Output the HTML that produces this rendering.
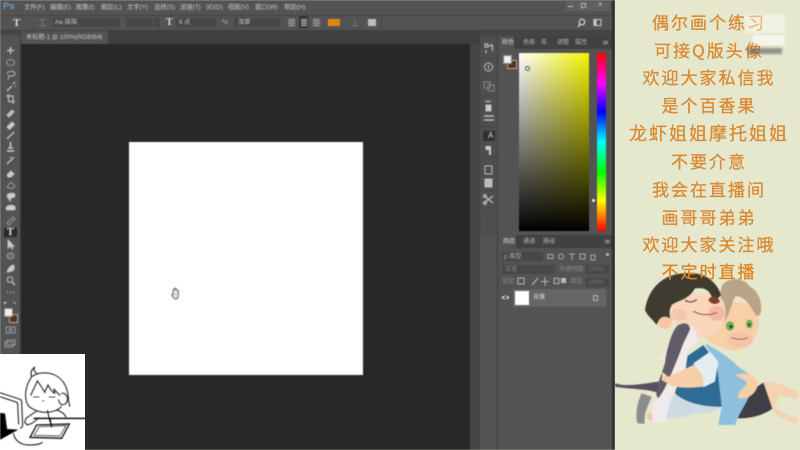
<!DOCTYPE html>
<html><head><meta charset="utf-8"><style>
html,body{margin:0;padding:0;width:800px;height:450px;overflow:hidden;background:#e6e8cd}
*{box-sizing:border-box}
div{position:absolute}
#ps{left:0;top:0;width:615px;height:450px;background:#535353;overflow:hidden;filter:blur(.6px);font-family:"Liberation Sans","Noto Sans CJK SC",sans-serif;color:#c4c4c4}
.m{top:4px;font-size:6.3px;line-height:8px;white-space:nowrap;color:#c8c8c8}
.t{font-size:6.2px;line-height:8px;white-space:nowrap;color:#b0b0b0}
.f{background:#474747;height:9px}
#cream{left:615px;top:0;width:185px;height:450px;background:#e6e8cd}
.l{left:0;width:188px;text-align:center;font-family:"WenQuanYi Zen Hei","Noto Sans CJK SC",sans-serif;color:#d98a35;font-size:17px;letter-spacing:2px;line-height:22px;white-space:nowrap;filter:blur(.35px);-webkit-text-stroke:.3px #d98a35}
</style></head><body>
<div id="ps">
<div style="left:0;top:15px;width:615px;height:1px;background:#444"></div>
<div style="left:0;top:30px;width:615px;height:1px;background:#404040"></div>
<div style="left:3px;top:1px;font-size:9.5px;line-height:12px;font-weight:bold;color:#6f9fc0">Ps</div>
<div class="m" style="left:24px">文件(F)</div><div class="m" style="left:50px">编辑(E)</div><div class="m" style="left:76px">图像(I)</div><div class="m" style="left:101px">图层(L)</div><div class="m" style="left:127px">文字(Y)</div><div class="m" style="left:154px">选择(S)</div><div class="m" style="left:180px">滤镜(T)</div><div class="m" style="left:206px">3D(D)</div><div class="m" style="left:228px">视图(V)</div><div class="m" style="left:255px">窗口(W)</div><div class="m" style="left:284px">帮助(H)</div>
<div style="left:566px;top:1px;width:44px;height:10px;background:#5f5f5f"></div>
<div style="left:568px;top:6px;width:5px;height:1px;background:#ccc"></div>
<div style="left:581px;top:3px;width:5px;height:5px;border:1px solid #bbb"></div>
<div style="left:598px;top:0;font-size:8px;line-height:10px;color:#ccc">×</div>
<div style="left:13px;top:17px;font:bold 11px/12px 'Liberation Serif',serif;color:#ddd">T</div>
<div style="left:38px;top:18px;font:9px/10px 'Liberation Serif',serif;color:#8a8a8a">工</div>
<div class="f" style="left:53px;top:18px;width:67px;height:9px"></div>
<div class="t" style="left:55px;top:19px;color:#c8c8c8">Aa·简简</div>
<div class="f" style="left:126px;top:18px;width:26px"></div>
<div class="f" style="left:154px;top:18px;width:6px"></div>
<div style="left:166px;top:17px;font:bold 10px/12px 'Liberation Serif',serif;color:#ddd">T</div>
<div class="f" style="left:176px;top:18px;width:40px"></div>
<div class="t" style="left:179px;top:19px;color:#ccc">8 点</div>
<div class="t" style="left:222px;top:19px">ªa</div>
<div class="f" style="left:234px;top:18px;width:46px"></div>
<div class="t" style="left:238px;top:19px;color:#ccc">浑厚</div>
<div style="left:288px;top:19px;width:7px;height:7px;background:repeating-linear-gradient(#aaa 0 1px,#555 1px 2px)"></div>
<div style="left:299px;top:16px;width:9px;height:12px;background:#333"></div>
<div style="left:301px;top:19px;width:6px;height:7px;background:repeating-linear-gradient(#bbb 0 1px,#444 1px 2px)"></div>
<div style="left:313px;top:19px;width:7px;height:7px;background:repeating-linear-gradient(#aaa 0 1px,#555 1px 2px)"></div>
<div style="left:328px;top:19px;width:12px;height:7px;background:#e08614"></div>
<div style="left:351px;top:18px;font:9px/10px 'Liberation Serif',serif;color:#888">⊥</div>
<div style="left:368px;top:19px;width:8px;height:7px;background:#bdbdbd"></div>
<div style="left:381px;top:16px;width:1px;height:13px;background:#444"></div>
<svg style="position:absolute;left:575px;top:17px" width="32" height="12" viewBox="0 0 32 12"><circle cx="7" cy="5" r="2.8" fill="none" stroke="#ddd" stroke-width="1.1"/><path d="M5 7.2 3 10" stroke="#ddd" stroke-width="1.3"/><rect x="19" y="2.5" width="7" height="6" fill="none" stroke="#ccc"/><rect x="19" y="2.5" width="2.5" height="6" fill="#ccc"/></svg>
<div style="left:21px;top:31px;width:458px;height:13px;background:#3f3f3f"></div>
<div style="left:21px;top:31px;width:87px;height:13px;background:#535353"></div>
<div class="t" style="left:26px;top:34px;color:#c8c8c8">未标题-1 @ 100%(RGB/8#)</div>
<div class="t" style="left:99px;top:34px">×</div>
<div style="left:0;top:31px;width:21px;height:4px;background:#454545"></div>
<div style="left:21px;top:44px;width:449px;height:406px;background:#282828"></div>
<div style="left:470px;top:44px;width:9px;height:406px;background:#464646"></div>
<div style="left:20px;top:31px;width:1px;height:419px;background:#3c3c3c"></div>
<div style="left:129px;top:142px;width:234px;height:233px;background:#fff"></div>
<svg style="position:absolute;left:170px;top:287px" width="12" height="14" viewBox="0 0 12 14"><path d="M3 7V3.200c0-1 1.300-1 1.300 0V1.800c0-1 1.400-1 1.400 0v1c0-.9 1.400-.9 1.400 0v1c0-.8 1.300-.8 1.300 0v4.700c0 1.800-1 3-1.400 3.500H4.500C3.500 11 2.500 9.500 1.800 8.500 1.300 7.500 2.300 6.800 3 7.500Z" fill="#ddd" stroke="#555" stroke-width=".8"/></svg>
<svg style="position:absolute;left:0;top:44px" width="21" height="306" viewBox="0 44 21 306" fill="none" stroke="#bdbdbd" stroke-width="1">
<path d="M10.500 47v7M7 50.500h7" stroke-width="1.600"/>
<ellipse cx="10.500" cy="62.500" rx="4" ry="3" stroke="#999"/>
<path d="M7 74c0-3.500 8-3.500 8-.5s-5 3-6 2l-1 4"/>
<path d="M7 91l5-5M13 84l2-2M15 86h1" stroke-width="1.400"/>
<path d="M8.500 94v7.500H15M6 96h7v8" stroke-width="1.200"/>
<path d="M7 115l5-5 2 2-5 5z" fill="#bdbdbd"/>
<path d="M7 127l5-5 2.500 2.500-5 5z" fill="#ccc"/>
<path d="M7 139l7-7" stroke-width="1.400"/>
<path d="M8 148h5M10.500 142v5M7 151h7" stroke-width="1.800"/>
<path d="M7 164l7-7M10 157l1 1" stroke-width="1.400"/>
<path d="M7 175l4-4 3 3-3 3H8z" fill="#ccc"/>
<path d="M7 187l4-5 4 4-3 3z" stroke="#999"/>
<path d="M7 196c0-3 7-4 8-1 0 3-3 3-4 3l-1 3z" fill="#ccc"/>
<path d="M6 209c0-4 7-5 9-2 1 2 0 3-2 3H7z" fill="#ccc"/>
<path d="M7 223l6-6 2 2-6 6z" stroke="#999"/>
</svg>
<div style="left:4px;top:228px;width:13px;height:9px;background:#2a2a2a"></div>
<div style="left:7px;top:227px;font:bold 10px/11px 'Liberation Serif',serif;color:#eee">T</div>
<svg style="position:absolute;left:0;top:238px" width="21" height="112" viewBox="0 238 21 112" fill="none" stroke="#bdbdbd" stroke-width="1">
<path d="M8 240v8l2-2 2 3 1-1-2-2h3z" fill="#ccc"/>
<ellipse cx="10.500" cy="256" rx="3.500" ry="3" stroke="#999" fill="#6a6a6a"/>
<path d="M7 272c1-3 3-6 6-7 2 1 1 3 1 4s-2 3-7 3z" fill="#ccc"/>
<circle cx="10" cy="279.500" r="2.800"/><path d="M12 282l3 3" stroke-width="1.400"/>
<path d="M7 292.500h1M10 292.500h1M13 292.500h1" stroke-width="1.400"/>
<rect x="6" y="327" width="9" height="6" stroke="#999"/><circle cx="10.500" cy="330" r="1.500" stroke="#999"/>
<rect x="7" y="340" width="8" height="5" stroke="#999"/><rect x="5" y="342" width="8" height="5" stroke="#999"/>
<path d="M4 302l3 0-3 3z" fill="#ccc" stroke="none"/><path d="M13 302l3 2"/>
</svg>
<div style="left:9px;top:314px;width:9px;height:9px;background:#5d3018;border:1px solid #aaa"></div>
<div style="left:4px;top:308px;width:9px;height:9px;background:#eef0e2;border:1px solid #888"></div>
<div style="left:479px;top:31px;width:1px;height:419px;background:#3e3e3e"></div>
<div style="left:497px;top:31px;width:1px;height:419px;background:#3e3e3e"></div>
<div style="left:480px;top:31px;width:17px;height:5px;background:#454545"></div>
<div style="left:498px;top:31px;width:114px;height:5px;background:#454545"></div>
<div style="left:480px;top:36px;width:17px;height:200px;background:#4e4e4e"></div>
<svg style="position:absolute;left:480px;top:36px" width="17" height="180" viewBox="480 36 17 180" fill="none" stroke="#bdbdbd" stroke-width="1">
<path d="M485 44h3v3h-3zM486 50v3M491 44c2 1 2 4 1 7M489 46h3" stroke-width="1.200"/>
<path d="M480 58h17M480 77h17M480 96h17" stroke="#444"/>
<circle cx="488.500" cy="67" r="4"/><path d="M488.500 65v4"/>
<rect x="484" y="82" width="6" height="6" stroke="#888"/><rect x="488" y="85" width="6" height="6" stroke="#888"/>
<path d="M485 101l3 1 3-1M486 105h5v6h-5z" fill="#ccc"/>
<path d="M484 116h10M484 120h10" stroke-width="1.400"/>
<path d="M480 127h17" stroke="#444"/>
<rect x="483" y="131" width="12" height="10" fill="#2f2f2f" stroke="none"/>
<path d="M480 157h17M480 191h17M480 208h17" stroke="#444"/>
<path d="M486 146h5v9h-2v-5h-2c-2 0-2-4-1-4z" fill="#ccc" stroke="none"/>
<rect x="485" y="166" width="7" height="8"/><rect x="485" y="179" width="7" height="8" fill="#bbb"/>
<path d="M484 196l9 7M484 203l9-7" stroke-width="1.300"/><circle cx="485" cy="196" r="1.500"/><circle cx="485" cy="203" r="1.500"/>
</svg>
<div style="left:488px;top:131px;font:8px/10px 'Liberation Sans',sans-serif;color:#ddd">A</div>
<div style="left:498px;top:36px;width:114px;height:13px;background:#414141"></div>
<div style="left:498px;top:36px;width:16px;height:13px;background:#535353"></div>
<div class="t" style="left:502px;top:39px;color:#d0d0d0">颜色</div><div class="t" style="left:523px;top:39px">色板</div><div class="t" style="left:541px;top:39px">库</div><div class="t" style="left:557px;top:39px">调整</div><div class="t" style="left:575px;top:39px">属性</div>
<div style="left:603px;top:41px;width:5px;height:4px;background:repeating-linear-gradient(#aaa 0 1px,#414141 1px 2px)"></div>
<div style="left:507px;top:60px;width:10px;height:9px;background:#5d3018;border:1px solid #aaa"></div>
<div style="left:503px;top:55px;width:9px;height:9px;background:#eef0e2;border:1px solid #888"></div>
<div style="left:519px;top:53px;width:70px;height:178px;background:linear-gradient(to top,#000,rgba(0,0,0,0)),linear-gradient(to right,#fff,#f4f400)"></div>
<div style="left:525px;top:66px;width:5px;height:5px;border-radius:50%;border:1px solid #555"></div>
<div style="left:597px;top:53px;width:9px;height:178px;background:linear-gradient(#ff0000,#ff00ff 17%,#0000ff 33%,#00ffff 50%,#00ff00 67%,#ffff00 83%,#ff0000)"></div>
<div style="left:592px;top:199px;width:3px;height:3px;border-radius:50%;background:#eee"></div>
<div style="left:498px;top:231px;width:114px;height:5px;background:#535353"></div>
<div style="left:498px;top:235px;width:114px;height:13px;background:#414141"></div>
<div style="left:498px;top:235px;width:18px;height:13px;background:#535353"></div>
<div class="t" style="left:503px;top:238px;color:#d0d0d0">图层</div><div class="t" style="left:523px;top:238px">通道</div><div class="t" style="left:543px;top:238px">路径</div>
<div style="left:605px;top:240px;width:5px;height:4px;background:repeating-linear-gradient(#aaa 0 1px,#414141 1px 2px)"></div>
<div class="f" style="left:502px;top:252px;width:41px"></div>
<div class="t" style="left:504px;top:253px">ρ 类型</div>
<svg style="position:absolute;left:546px;top:252px" width="56" height="10" viewBox="0 0 56 10" fill="none" stroke="#aaa"><rect x="2" y="2.500" width="5" height="4"/><circle cx="15" cy="4.500" r="2.500"/><path d="M23 2h6M26 2v6"/><rect x="34" y="2" width="5" height="5"/><rect x="45" y="3" width="4" height="5"/></svg>
<div style="left:606px;top:253px;width:3px;height:3px;border-radius:50%;background:#bbb"></div>
<div class="f" style="left:502px;top:265px;width:53px"></div>
<div class="t" style="left:505px;top:266px;color:#888">正常</div>
<div class="t" style="left:559px;top:266px;color:#888">不透明度:</div>
<div class="f" style="left:586px;top:265px;width:23px"></div><div class="t" style="left:588px;top:266px;color:#777">100%</div>
<div class="t" style="left:502px;top:278px;color:#888">锁定:</div>
<svg style="position:absolute;left:516px;top:276px" width="48" height="11" viewBox="0 0 48 11" fill="none" stroke="#b5b5b5"><rect x="2" y="2" width="6" height="6"/><path d="M16 9l6-7" stroke-width="1.300"/><path d="M29 1v9M25 5.500h8"/><rect x="38" y="2.500" width="5" height="5"/></svg>
<div style="left:561px;top:278px;width:5px;height:5px;background:#bbb"></div>
<div class="t" style="left:570px;top:278px;color:#888">填充:</div>
<div class="f" style="left:586px;top:278px;width:23px"></div><div class="t" style="left:588px;top:279px;color:#777">100%</div>
<svg style="position:absolute;left:501px;top:294px" width="9" height="7" viewBox="0 0 9 7"><path d="M.5 3.500C2 1 7 1 8.500 3.500 7 6 2 6 .5 3.500Z" fill="#ccc"/><circle cx="4.500" cy="3.500" r="1.300" fill="#444"/></svg>
<div style="left:513px;top:289px;width:93px;height:18px;background:#656565"></div>
<div style="left:515px;top:291px;width:14px;height:14px;background:#fff"></div>
<div class="t" style="left:533px;top:294px;color:#ddd">背景</div>
<div style="left:593px;top:295px;width:5px;height:6px;border:1px solid #bbb;border-radius:1px"></div>
<div style="left:612px;top:0;width:3px;height:450px;background:#2e2e2e"></div>
</div>
<div style="left:0;top:354px;width:85px;height:96px;background:#fff;overflow:hidden">
<svg width="90" height="100" viewBox="0 0 270 300" style="position:absolute;left:0;top:-4px;filter:blur(.4px)" fill="none" stroke="#111" stroke-width="3">
<path d="M0 128 60 148c4 2 5 5 5 8l3 70c0 4-3 7-8 9"/>
<path d="M0 140 48 156c3 1 5 3 5 7l3 60"/>
<path d="M0 190 14 192 20 238 50 240 0 268Z" fill="#000"/>
<path d="M40 250c5 22 20 35 50 35 15 0 30-2 38-8"/>
<path d="M95 80c-4-10-2-20 8-28-2 8 0 14 7 18"/>
<path d="M95 80c-12 18-20 40-18 62 1 14 6 24 13 30"/>
<path d="M95 80c20-15 55-15 75-2 20 12 32 35 35 62 0 12 2 22 5 30"/>
<path d="M112 92c-5 15-15 30-20 45M112 92c8 14 18 25 22 35l10-22c6 10 10 20 20 25l-2-12 20 20"/>
<path d="M90 172c15 10 30 15 45 15 20 0 38-5 50-18"/>
<path d="M100 141h18M146 141h20M127 153h6" stroke-width="2.500"/>
<path d="M184 130c12-2 20 8 18 20-2 10-8 16-18 14-5-4-8-10-8-16" fill="#fff"/>
<path d="M110 183 78 205l-4 12 8 8 14-5 22-17"/>
<path d="M170 180c15 5 25 12 28 22"/>
<path d="M142 180l8 35"/>
<path d="M150 205l4 28" stroke-width="4"/>
<path d="M100 205H270" stroke-width="4.500"/>
<path d="M110 225 208 222 185 265 90 262Z" stroke-width="4" fill="#fff"/>
<path d="M118 230 198 227 180 258 102 256Z" stroke-width="2"/>
<path d="M150 210l5 22" stroke-width="4"/>
</svg>
</div>
<div id="cream">
<div class="l" style="top:11px">偶尔画个练习</div>
<div class="l" style="top:39px">可接Q版头像</div>
<div class="l" style="top:66px">欢迎大家私信我</div>
<div class="l" style="top:94px">是个百香果</div>
<div class="l" style="top:122px;font-size:18px">龙虾姐姐摩托姐姐</div>
<div class="l" style="top:150px">不要介意</div>
<div class="l" style="top:178px">我会在直播间</div>
<div class="l" style="top:206px">画哥哥弟弟</div>
<div class="l" style="top:233px">欢迎大家关注哦</div>
<div style="left:130px;top:14px;width:40px;height:19px;background:rgba(255,255,255,.4);filter:blur(1px)"></div>
<div style="left:138px;top:35px;width:32px;height:10px;background:rgba(255,255,255,.6);filter:blur(.6px)"></div>
<div style="left:133px;top:48px;width:34px;height:6px;background:rgba(80,80,90,.55);filter:blur(1px)"></div>
<svg width="185" height="200" viewBox="0 0 555 600" style="position:absolute;left:0;top:250px;filter:blur(.6px)">
<path d="M0 400C40 412 90 400 130 395L140 432C100 415 40 418 0 410Z" fill="#56505f"/>
<path d="M80 430C65 460 60 500 68 520L88 522 90 490 110 440Z" fill="#8d8d8d"/>
<path d="M370 505C365 470 380 440 445 398L480 470C450 495 410 505 370 505Z" fill="#3e3e44"/>
<path d="M445 398C470 385 520 415 550 425L548 445C530 445 510 440 495 435L480 470C500 490 530 500 552 505L545 520C510 515 470 490 470 470Z" fill="#f5d2b0"/>
<path d="M270 280C300 295 340 320 370 350L420 385 400 445 370 500 360 525 310 525 320 470 300 340Z" fill="#8ec0de"/>
<path d="M360 375C385 365 420 370 430 400 425 430 400 450 370 445 365 420 395 415 395 395Z" fill="#f6cfa8"/>
<path d="M320 190C340 150 400 140 430 190 440 250 410 290 370 300 340 305 300 285 270 265Z" fill="#f7d0a8"/>
<ellipse cx="375" cy="270" rx="40" ry="22" fill="#f3b8a0" opacity=".5"/>
<path d="M320 110C330 85 380 75 405 110 435 125 445 170 435 195 425 200 420 195 410 175 395 150 375 135 360 140 350 165 345 185 330 215 325 180 310 140 320 110Z" fill="#b9a488"/>
<ellipse cx="345" cy="228" rx="12" ry="14" fill="#6fae52"/>
<ellipse cx="403" cy="222" rx="10" ry="13" fill="#6fae52"/>
<circle cx="348" cy="230" r="5" fill="#2d4a25"/><circle cx="403" cy="224" r="4" fill="#2d4a25"/>
<path d="M350 262C365 270 385 270 398 263" stroke="#8a5a3a" stroke-width="2.500" fill="none"/>
<path d="M140 480C150 460 175 430 200 430L320 470C300 490 280 490 240 490 210 500 170 510 155 505Z" fill="#cfdbe2"/>
<path d="M95 490C105 485 125 490 135 500L130 510H100Z" fill="#f3c9a3"/>
<path d="M215 320 265 285 305 340 320 470C280 470 220 465 180 430L190 390Z" fill="#2f6b95"/>
<path d="M235 340 285 305 310 335 300 395 265 412Z" fill="#e4edf2"/>
<path d="M165 170C200 130 300 110 325 155 340 190 330 230 300 250 270 270 220 265 190 240Z" fill="#f9d6bb"/>
<ellipse cx="305" cy="190" rx="25" ry="22" fill="#f0a090" opacity=".55"/>
<ellipse cx="190" cy="195" rx="25" ry="18" fill="#f0a090" opacity=".3"/>
<circle cx="150" cy="215" r="22" fill="#f4c6a3"/>
<path d="M90 180C100 110 150 70 210 70 250 65 300 80 318 135L295 160C290 130 280 110 240 115 220 150 190 150 170 165 160 180 165 200 165 205 140 190 130 210 125 225 110 205 95 195 90 180Z" fill="#3f3b31"/>
<path d="M210 150C220 158 235 158 245 148" stroke="#3a2a20" stroke-width="3" fill="none"/>
<path d="M280 150C290 135 305 135 315 155 305 165 290 165 280 150Z" fill="#7b3d2c"/>
<path d="M235 183C255 197 285 197 305 187" stroke="#7f4a30" stroke-width="2.500" fill="none"/>
<path d="M190 225C210 215 225 220 225 240L210 290 170 385 130 445C115 430 130 400 150 340 155 300 170 240 190 225Z" fill="#615c66"/>
<path d="M230 225C240 240 250 260 250 270L220 300 210 370 170 440 150 515 120 520C105 500 105 460 135 440 160 400 190 320 205 280 215 260 225 240 230 225Z" fill="#f1eaec"/>
<path d="M135 310l12 8-2 14-12-4z" fill="#f1eaec"/>
<path d="M140 385C170 380 210 355 235 345 265 370 272 400 262 410 230 415 190 415 165 405L140 390Z" fill="#f6cfa8"/>
<path d="M140 365l12 8 10 12-20 8z" fill="#f6cfa8"/>
</svg>
<div class="l" style="top:260px;color:#de8420;-webkit-text-stroke:.3px #de8420">不定时直播</div>
</div>
</body></html>
